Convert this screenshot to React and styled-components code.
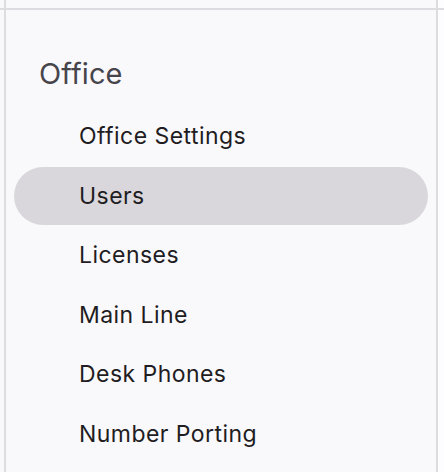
import styled, { createGlobalStyle } from 'styled-components'

const GlobalStyle = createGlobalStyle`
   html, body {
      margin: 0;
      padding: 0;
      height: 100%;
      background: #f9f8fb;
   }
   #root {
      height: 100%;
   }
`

const Page = styled.div`
   height: 100vh;
   display: grid;
   grid-template-columns: 4px 434px 1fr;
   grid-template-rows: 10px 1fr;
   font-family: 'Inter', 'Roboto', sans-serif;
   overflow: hidden;
`

const TopCell = styled.div`
   border-bottom: 2px solid #dddce0;
   box-sizing: border-box;
   background: ${({ $light }) => ($light ? '#fdfcff' : '#f9f8fb')};
   border-left: ${({ $framed }) => ($framed ? '2px solid #dddce0' : 'none')};
   border-right: ${({ $framed }) => ($framed ? '2px solid #dddce0' : 'none')};
`

const Side = styled.div`
   background: ${({ $light }) => ($light ? '#fdfcff' : '#f9f8fb')};
`

const Drawer = styled.nav`
   border-left: 2px solid #dddce0;
   border-right: 2px solid #dddce0;
   background: #f9f8fb;
   padding: 0 8px;
   display: flex;
   flex-direction: column;
`

const Heading = styled.div`
   height: 56px;
   margin-top: 35px;
   margin-bottom: 6px;
   padding-left: 25px;
   display: flex;
   align-items: center;
   font-size: 29px;
   color: #47454c;
   letter-spacing: 0.1px;
`

const NavList = styled.ul`
   list-style: none;
   margin: 0;
   padding: 0;
   display: flex;
   flex-direction: column;
   gap: 1.5px;
`

const NavItem = styled.li`
   height: 58px;
   border-radius: 29px;
   padding-left: 65px;
   display: flex;
   align-items: center;
   font-size: 23px;
   color: #1f1d22;
   letter-spacing: 0.45px;
   background: ${({ $active }) => ($active ? '#d9d7db' : 'transparent')};
   cursor: pointer;
`

const items = [
   'Office Settings',
   'Users',
   'Licenses',
   'Main Line',
   'Desk Phones',
   'Number Porting',
]

const App = () => {
   return (
      <>
         <GlobalStyle />
         <Page>
            <TopCell />
            <TopCell $framed />
            <TopCell $light />
            <Side />
            <Drawer>
               <Heading>Office</Heading>
               <NavList>
                  {items.map((item) => (
                     <NavItem key={item} $active={item === 'Users'}>
                        {item}
                     </NavItem>
                  ))}
               </NavList>
            </Drawer>
            <Side $light />
         </Page>
      </>
   )
}

export default App
